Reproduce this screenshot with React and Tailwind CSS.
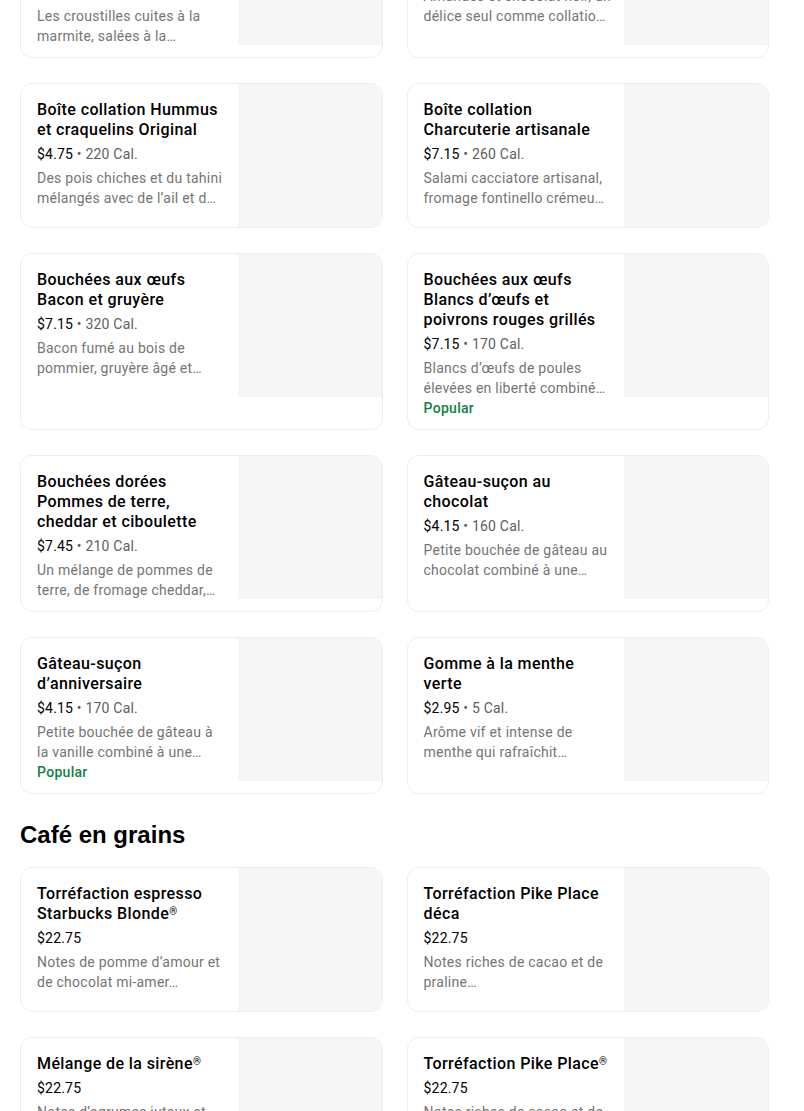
import React from 'react';

// lines are split the way the menu shows them
const snacks = [
  {
    title: ['Croustilles Kettle Brand', 'Sel de mer et vinaigre', 'de cidre'],
    price: '$2.45',
    cal: '220 Cal.',
    desc: ['Les croustilles cuites à la', 'marmite, salées à la…'],
  },
  {
    title: ['Barre KIND Chocolat noir', 'et sel de mer'],
    price: '$3.25',
    cal: '200 Cal.',
    desc: ['Amandes et chocolat noir, un', 'délice seul comme collatio…'],
  },
  {
    title: ['Boîte collation Hummus', 'et craquelins Original'],
    price: '$4.75',
    cal: '220 Cal.',
    desc: ['Des pois chiches et du tahini', 'mélangés avec de l’ail et d…'],
  },
  {
    title: ['Boîte collation', 'Charcuterie artisanale'],
    price: '$7.15',
    cal: '260 Cal.',
    desc: ['Salami cacciatore artisanal,', 'fromage fontinello crémeu…'],
  },
  {
    title: ['Bouchées aux œufs', 'Bacon et gruyère'],
    price: '$7.15',
    cal: '320 Cal.',
    desc: ['Bacon fumé au bois de', 'pommier, gruyère âgé et…'],
  },
  {
    title: ['Bouchées aux œufs', 'Blancs d’œufs et', 'poivrons rouges grillés'],
    price: '$7.15',
    cal: '170 Cal.',
    desc: ['Blancs d’œufs de poules', 'élevées en liberté combiné…'],
    popular: true,
  },
  {
    title: ['Bouchées dorées', 'Pommes de terre,', 'cheddar et ciboulette'],
    price: '$7.45',
    cal: '210 Cal.',
    desc: ['Un mélange de pommes de', 'terre, de fromage cheddar,…'],
  },
  {
    title: ['Gâteau-suçon au', 'chocolat'],
    price: '$4.15',
    cal: '160 Cal.',
    desc: ['Petite bouchée de gâteau au', 'chocolat combiné à une…'],
  },
  {
    title: ['Gâteau-suçon', 'd’anniversaire'],
    price: '$4.15',
    cal: '170 Cal.',
    desc: ['Petite bouchée de gâteau à', 'la vanille combiné à une…'],
    popular: true,
  },
  {
    title: ['Gomme à la menthe', 'verte'],
    price: '$2.95',
    cal: '5 Cal.',
    desc: ['Arôme vif et intense de', 'menthe qui rafraîchit…'],
  },
];

const beans = [
  {
    title: ['Torréfaction espresso', 'Starbucks Blonde'],
    reg: true,
    price: '$22.75',
    desc: ['Notes de pomme d’amour et', 'de chocolat mi-amer…'],
  },
  {
    title: ['Torréfaction Pike Place', 'déca'],
    price: '$22.75',
    desc: ['Notes riches de cacao et de', 'praline…'],
  },
  {
    title: ['Mélange de la sirène'],
    reg: true,
    price: '$22.75',
    desc: ['Notes d’agrumes juteux et', 'de chocolat noir…'],
  },
  {
    title: ['Torréfaction Pike Place'],
    reg: true,
    price: '$22.75',
    desc: ['Notes riches de cacao et de', 'praline…'],
  },
];

const ItemCard = ({ item }) => (
  <div className="flex rounded-xl border border-[#eeeeee] bg-white overflow-hidden">
    <div className="flex-1 min-w-0 pt-4 px-4 pb-[11px]">
      <p className="text-[16px] leading-5 font-medium tracking-[0.4px] text-black">
        {item.title.map((line, i) => (
          <span key={i} className="block whitespace-nowrap">
            {line}
            {item.reg && i === item.title.length - 1 && (
              <span className="text-[10px] align-top leading-4">®</span>
            )}
          </span>
        ))}
      </p>
      <p className="mt-1 text-[14px] leading-5 tracking-[0.2px] text-black">
        {item.price}
        {item.cal && <span className="text-[#5e5e5e]"> • {item.cal}</span>}
      </p>
      <p className="mt-1 text-[14px] leading-5 tracking-[0.25px] text-[#757575]">
        {item.desc.map((line, i) => (
          <span key={i} className="block whitespace-nowrap">
            {line}
          </span>
        ))}
      </p>
      {item.popular && (
        <p className="text-[14px] leading-5 font-medium tracking-[0.3px] text-[#0e8345]">Popular</p>
      )}
    </div>
    <div className="w-[144px] h-[143px] shrink-0 bg-[#f6f6f6]" />
  </div>
);

const App = () => {
  return (
    <div className="min-h-[1111px] bg-white overflow-hidden font-['Roboto',sans-serif]">
      <div className="w-[749px] ml-5">
        <div className="grid grid-cols-2 gap-x-6 gap-y-[25px] -mt-[99px]">
          {snacks.map((s, i) => (
            <ItemCard key={i} item={s} />
          ))}
        </div>

        <h2 className="mt-[25px] mb-4 text-[24px] leading-8 font-bold text-black font-['Liberation_Sans',Arial,sans-serif]">
          Café en grains
        </h2>

        <div className="grid grid-cols-2 gap-x-6 gap-y-[25px]">
          {beans.map((b, i) => (
            <ItemCard key={i} item={b} />
          ))}
        </div>
      </div>
    </div>
  );
};

export default App;
